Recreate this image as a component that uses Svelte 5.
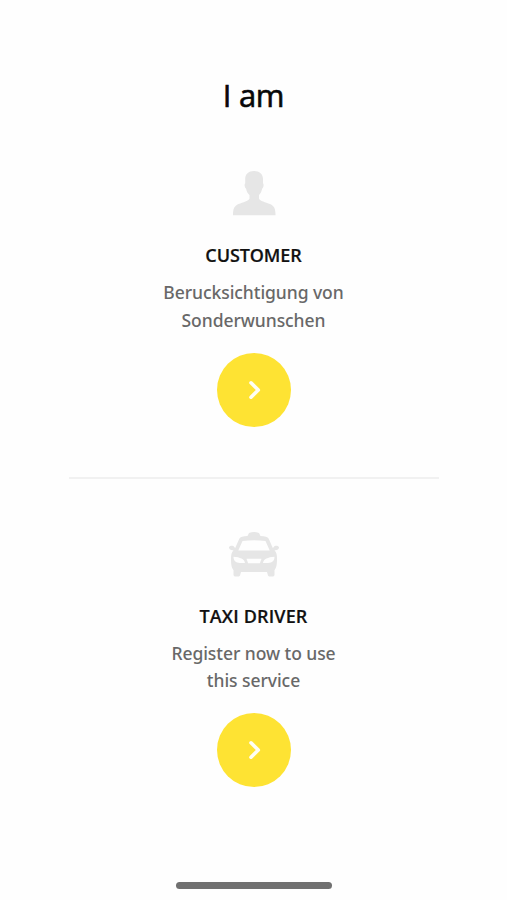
<script>
  const roles = [
    {
      id: 'customer',
      title: 'CUSTOMER',
      lines: ['Berucksichtigung von', 'Sonderwunschen'],
    },
    {
      id: 'driver',
      title: 'TAXI DRIVER',
      lines: ['Register now to use', 'this service'],
    },
  ];
</script>

<main class="screen">
  <h1>I am</h1>
  {#each roles as role}
    <section class="role {role.id}">
      {#if role.id === 'customer'}
        <svg class="icon" viewBox="0 0 60 60" aria-hidden="true">
          <path d="M30 7C35.500 7 39 10 39 15v4.200c1 .6.700 4.300-.8 5.300-.6 3-1.700 5.200-3.200 6.500v3.500c1 2.600 6.500 3.600 11 5.600 4.300 2.100 5.500 4.500 5.500 11.100H9c0-6.600 1.200-9 5.500-11.100 4.500-2 10-3 11-5.600V31c-1.700-1.300-2.900-3.500-3.500-6.500-1.500-1-1.800-4.700-.8-5.300V15c0-5 3.300-8 8.800-8z" />
        </svg>
      {:else}
        <svg class="icon" viewBox="0 0 60 60" aria-hidden="true">
          <path fill-rule="evenodd" d="M23.500 11 25 8Q30 5.800 35 8l1.500 3c4.500.3 7.300 1 8.200 2.700l4.100 9.200 1-.9c.5-2 5-1.700 5.200.3.200 2-1.800 3.200-4.500 2.900 2 2.200 2.500 4.600 2.500 8.500 0 5.500-.4 8.400-2.500 11.500V49.500c0 1.500-.8 2-2.200 2H46c-1.400 0-2-.6-2.300-2L43 47H17l-.7 2.500c-.3 1.400-.9 2-2.300 2h-2.300c-1.400 0-2.200-.5-2.200-2v-4.300C7.400 42.100 7 39.200 7 33.700c0-3.900.5-6.300 2.500-8.500-2.700.3-4.700-.9-4.500-2.900.2-2 4.700-2.300 5.200-.3l1 .9 4.100-9.200c.9-1.700 3.700-2.400 8.200-2.700zM18.500 16 14.300 25.500h31.400l-4.200-9.500q-11.500-1.700-23 0zM9.500 31.800c.2 4.400 2 5.700 6.500 6.200h5c-.7-4-4.700-5.700-11.500-6.200zM50.500 31.800c-6.800.5-10.800 2.200-11.500 6.200h5c4.500-.5 6.300-1.800 6.500-6.200zM22.500 33.800l1.600 4.500h11.800l1.600-4.500z" />
        </svg>
      {/if}
      <h2>{role.title}</h2>
      <p>
        {#each role.lines as line, i}
          <span class="line line-{i + 1}">{line}</span>
        {/each}
      </p>
      <button aria-label={role.title}>
        <svg viewBox="0 0 24 24" aria-hidden="true"><path d="M9 4.800 16.300 12 9 19.200" /></svg>
      </button>
    </section>
  {/each}
  <div class="home-indicator"></div>
</main>

<style>
  :global(body) {
    margin: 0;
    background: #fefefe;
  }
  .screen {
    box-sizing: border-box;
    width: 507px;
    height: 900px;
    padding: 75px 0 11px;
    display: flex;
    flex-direction: column;
    align-items: center;
    background: #fefefe;
    font-family: 'Open Sans', 'Noto Sans', sans-serif;
    overflow: hidden;
  }
  h1 {
    margin: 0 0 49px;
    font-size: 31px;
    line-height: 40px;
    font-weight: 400;
    letter-spacing: -0.3px;
    color: #080808;
    -webkit-text-stroke: 0.6px #080808;
  }
  .role {
    width: 370px;
    display: flex;
    flex-direction: column;
    align-items: center;
  }
  .customer {
    height: 313px;
    border-bottom: 2px solid #f1f1f1;
  }
  .driver {
    margin-top: 45.500px;
  }
  .icon {
    width: 60px;
    height: 60px;
    fill: #e6e6e6;
  }
  h2 {
    margin: 17px 0 10px;
    font-size: 18px;
    line-height: 28px;
    font-weight: 600;
    letter-spacing: -0.1px;
    color: #111;
    -webkit-text-stroke: 0.2px #111;
  }
  .driver h2 {
    letter-spacing: 0.15px;
  }
  p {
    margin: 0;
    font-family: 'Noto Sans', sans-serif;
    font-size: 17.500px;
    line-height: 27.700px;
    font-weight: 500;
    letter-spacing: -0.06px;
    color: #686868;
  }
  .line {
    display: block;
    text-align: center;
    white-space: nowrap;
  }
  button {
    width: 74px;
    height: 74px;
    margin: 18.300px 0 0;
    padding: 0;
    border: 0;
    border-radius: 50%;
    display: grid;
    place-items: center;
    background: #fee333;
  }
  button svg {
    width: 24px;
    height: 24px;
    fill: none;
    stroke: #fffef4;
    stroke-width: 3.600;
    stroke-linecap: round;
    stroke-linejoin: round;
  }
  .home-indicator {
    width: 156px;
    height: 7px;
    margin-top: auto;
    border-radius: 4px;
    background: #707070;
  }
</style>
